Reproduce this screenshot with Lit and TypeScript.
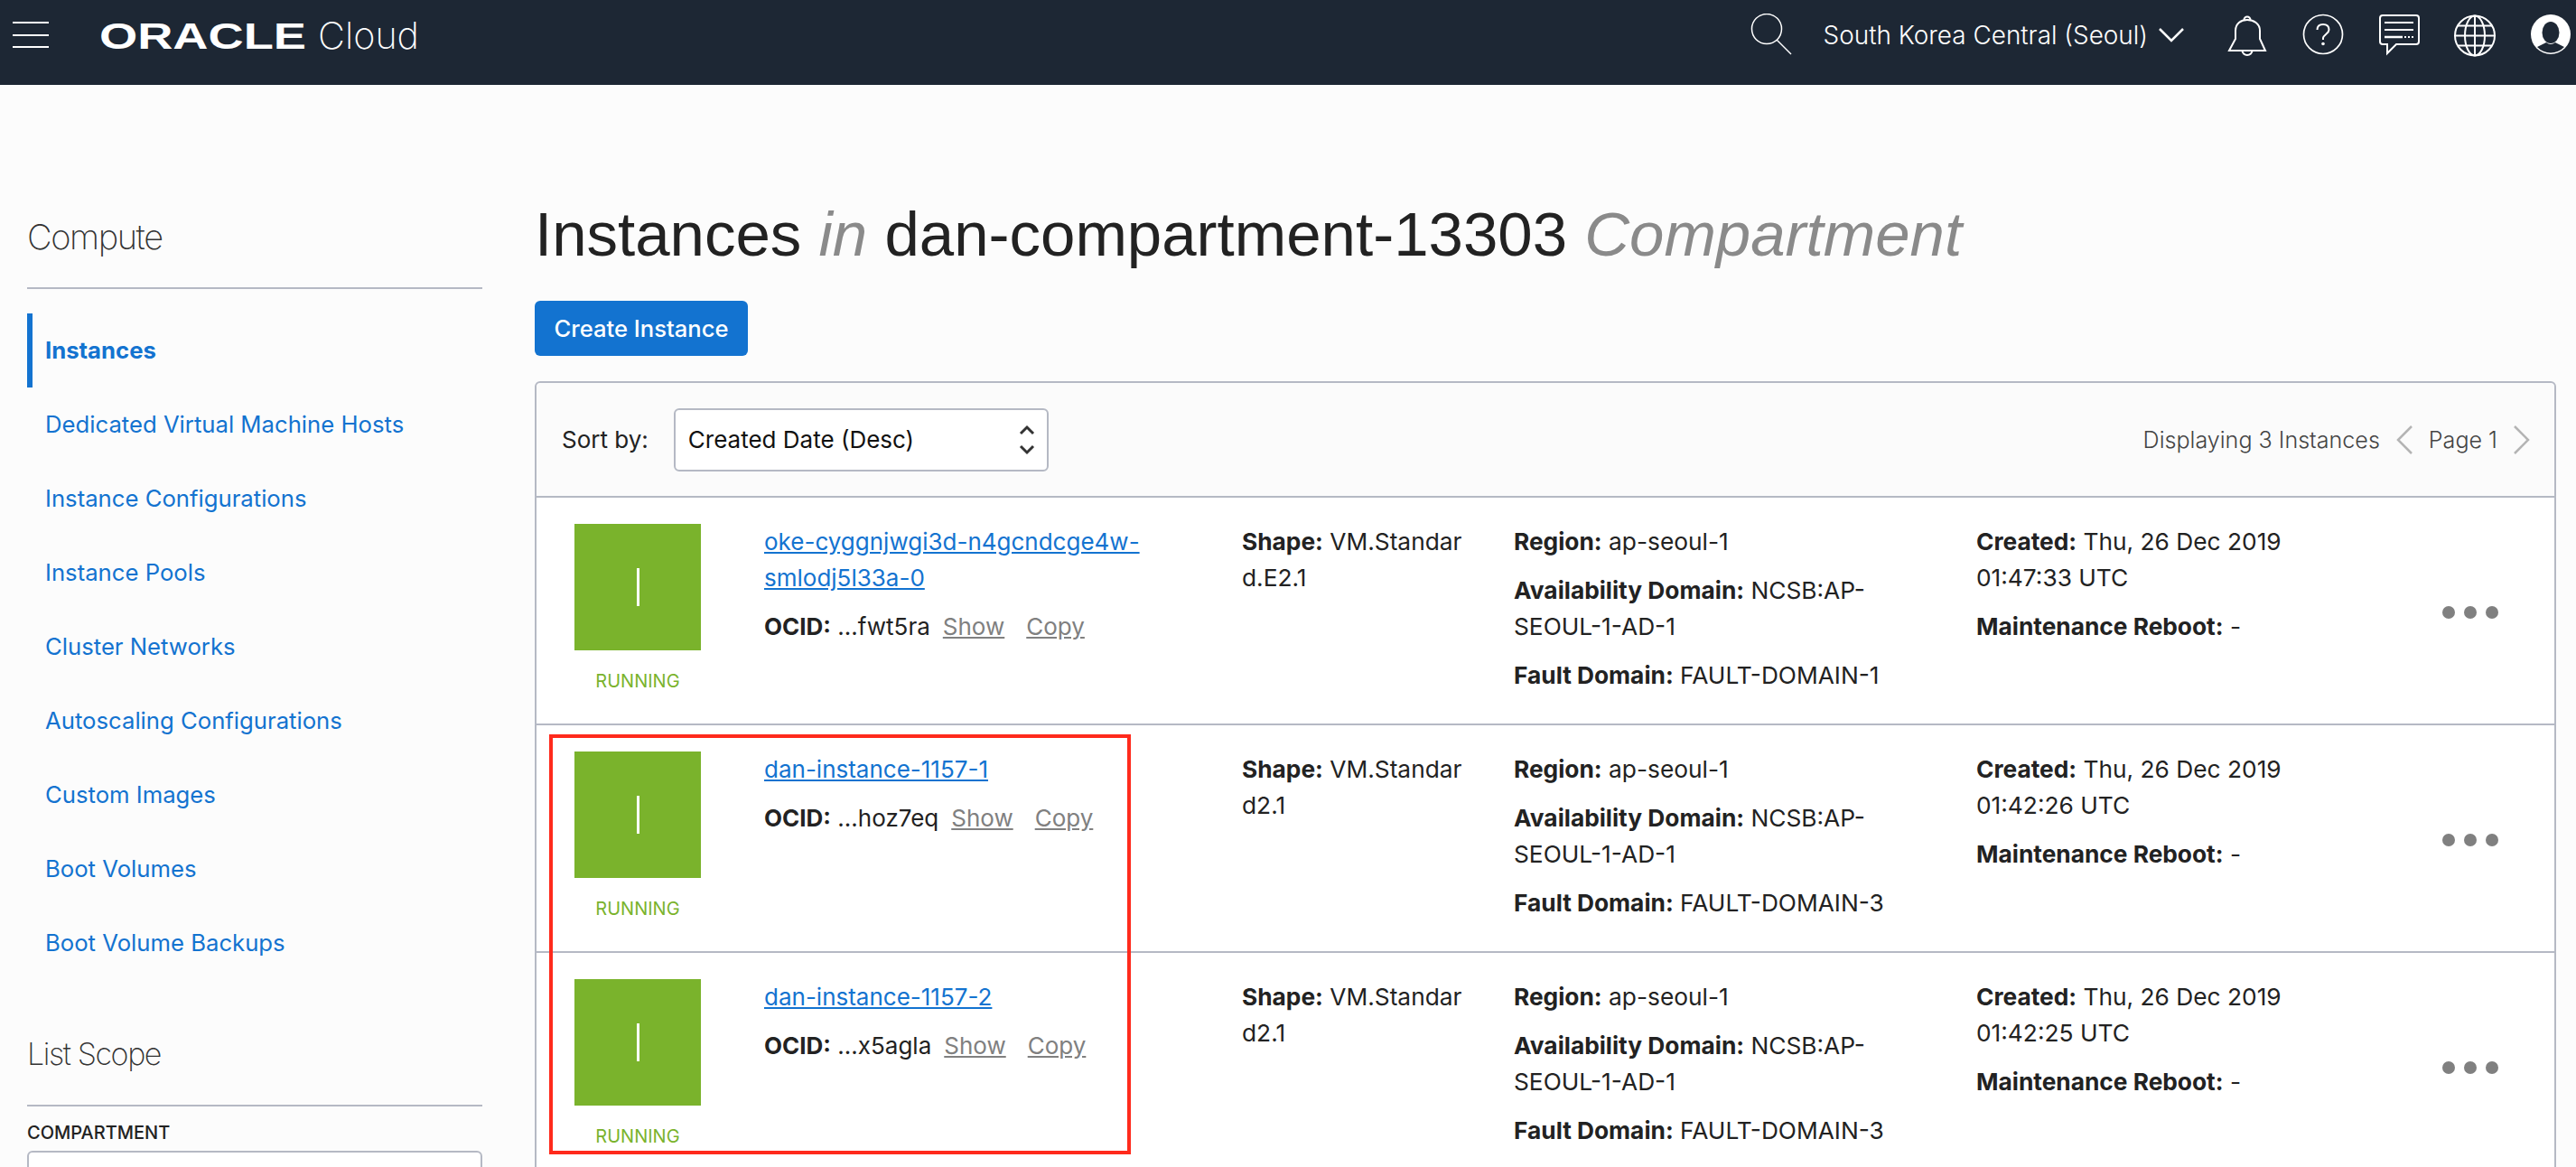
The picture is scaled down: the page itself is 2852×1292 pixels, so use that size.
import { LitElement, html, css } from 'lit';
import { customElement } from 'lit/decorators.js';

const navItems = [
  'Instances',
  'Dedicated Virtual Machine Hosts',
  'Instance Configurations',
  'Instance Pools',
  'Cluster Networks',
  'Autoscaling Configurations',
  'Custom Images',
  'Boot Volumes',
  'Boot Volume Backups',
];

// shape, domain and date break where the reference breaks them
const instances = [
  {
    name: 'oke-cyggnjwgi3d-n4gcndcge4w-smlodj5l33a-0',
    ocid: '...fwt5ra',
    shape: 'd.E2.1',
    fault: 'FAULT-DOMAIN-1',
    created: '01:47:33 UTC',
  },
  {
    name: 'dan-instance-1157-1',
    ocid: '...hoz7eq',
    shape: 'd2.1',
    fault: 'FAULT-DOMAIN-3',
    created: '01:42:26 UTC',
  },
  {
    name: 'dan-instance-1157-2',
    ocid: '...x5agla',
    shape: 'd2.1',
    fault: 'FAULT-DOMAIN-3',
    created: '01:42:25 UTC',
  },
];

@customElement('app-root')
export class AppRoot extends LitElement {
  static styles = css`
    :host {
      display: block;
      position: relative;
      height: 1292px;
      overflow: hidden;
      background: #fcfcfc;
      color: #222;
      font-family: Inter, "Liberation Sans", sans-serif;
      font-size: 26px;
      line-height: 40px;
    }

    a {
      color: #1373d0;
    }

    /* top bar */
    .topbar {
      display: flex;
      height: 94px;
      box-sizing: border-box;
      padding: 15px 4px 0 14px;
      background: #1d2734;
      color: #fff;
    }

    .burger {
      display: flex;
      flex-direction: column;
      gap: 11.5px;
      width: 40px;
      padding-top: 9px;
    }

    .burger i {
      display: block;
      height: 2px;
      background: #fff;
    }

    .logo {
      display: block;
      margin: -7px 0 0 56px;
    }

    .logo text {
      fill: #fff;
      font-family: "Liberation Sans", sans-serif;
    }

    .logo text.cloud {
      font-family: Inter, sans-serif;
      font-weight: 200;
    }

    .topbar-right {
      display: flex;
      align-items: flex-start;
      gap: 36px;
      margin-left: auto;
    }

    .topbar svg.icon {
      display: block;
      width: 48px;
      height: 48px;
      fill: none;
      stroke: #fff;
      stroke-width: 2;
    }

    .topbar svg.search {
      margin-right: -2px;
      stroke-width: 1.5;
    }

    .region {
      display: flex;
      align-items: center;
      gap: 12px;
      height: 48px;
      margin-right: 10px;
      font-size: 27.9px;
      font-weight: 300;
      white-space: nowrap;
    }

    /* page body */
    .page {
      display: flex;
      gap: 58px;
      padding: 0 22px 0 30px;
    }

    .side {
      flex: none;
      width: 504px;
      padding-top: 143px;
    }

    .side h2 {
      margin: 0;
      padding-bottom: 31px;
      border-bottom: 2px solid #b5b9c4;
      font-size: 38px;
      font-weight: 200;
      letter-spacing: -1.4px;
      line-height: 50px;
      color: #333;
    }

    .side h2.small {
      font-size: 34px;
    }

    .nav {
      margin: 27px 0 57px;
      font-size: 25.7px;
    }

    .nav a {
      display: flex;
      align-items: center;
      height: 82px;
      box-sizing: border-box;
      padding-left: 20px;
      text-decoration: none;
    }

    .nav a.active {
      border-left: 6px solid #1373d0;
      padding-left: 14px;
      font-weight: 700;
    }

    .scope-label {
      margin-top: 9px;
      font-size: 20px;
      line-height: 40px;
      font-weight: 500;
    }

    .scope-input {
      height: 70px;
      box-sizing: border-box;
      border: 2px solid #b5b9c4;
      border-radius: 6px;
      background: #fff;
    }

    .main {
      flex: 1;
      min-width: 0;
      padding-top: 128px;
    }

    h1 {
      margin: 0 0 35px;
      font-family: "Liberation Sans", sans-serif;
      font-size: 69px;
      font-weight: 400;
      line-height: 76px;
      white-space: nowrap;
    }

    h1 em {
      color: #8a8a8a;
    }

    .create {
      display: block;
      width: 236px;
      height: 61px;
      margin-bottom: 28px;
      padding: 0;
      border: 0;
      border-radius: 6px;
      background: #1373d0;
      color: #fff;
      font: 500 25.6px Inter, sans-serif;
    }

    .panel {
      border: 2px solid #b5b9c4;
      border-radius: 6px;
      background: #fff;
    }

    .toolbar {
      display: flex;
      align-items: center;
      height: 125px;
      padding: 0 26px 0 28px;
      border-bottom: 2px solid #b5b9c4;
      background: #fbfbfb;
      border-radius: 6px 6px 0 0;
    }

    .select {
      display: flex;
      align-items: center;
      justify-content: space-between;
      width: 415px;
      height: 70px;
      box-sizing: border-box;
      margin-left: 28px;
      padding: 0 12px 0 14px;
      border: 2px solid #b5b9c4;
      border-radius: 6px;
      background: #fff;
      color: #111;
    }

    .select svg {
      width: 20px;
      height: 42px;
      fill: none;
      stroke: #333;
      stroke-width: 3;
    }

    .pager {
      display: flex;
      align-items: center;
      gap: 17px;
      margin-left: auto;
      font-size: 25.1px;
      font-weight: 300;
      color: #444;
    }

    .pager svg {
      width: 20px;
      height: 32px;
      fill: none;
      stroke: #b4b4b4;
      stroke-width: 2.5;
    }

    .row {
      display: flex;
      height: 252px;
      box-sizing: border-box;
      padding: 29px 0 0 42px;
      border-bottom: 2px solid #b5b9c4;
    }

    .status {
      flex: none;
      width: 140px;
      margin-right: 70px;
      text-align: center;
    }

    .thumb {
      display: flex;
      align-items: center;
      justify-content: center;
      height: 140px;
      background: #7ab32c;
    }

    .thumb i {
      width: 3px;
      height: 42px;
      background: #fff;
    }

    .state {
      margin-top: 14px;
      color: #7ab32c;
      font-size: 20px;
    }

    .col p {
      margin: 0 0 14px;
      font-size: 26.3px;
      white-space: nowrap;
    }

    .col b {
      font-weight: 700;
    }

    .c-name {
      flex: none;
      width: 529px;
    }

    .name {
      display: block;
      width: 430px;
      margin-bottom: 14px;
    }

    .col p.ocid {
      font-size: 26px;
    }

    .c-shape {
      flex: none;
      width: 301px;
    }

    .c-region {
      flex: none;
      width: 512px;
    }

    .c-created {
      flex: none;
      width: 516px;
    }

    .ocid a {
      margin-left: 14px;
      color: #808080;
    }

    .ocid a + a {
      margin-left: 24px;
    }

    .dots {
      display: flex;
      gap: 10px;
      padding-top: 91px;
    }

    .dots i {
      width: 14px;
      height: 14px;
      border-radius: 50%;
      background: #808080;
    }

    .callout {
      position: absolute;
      left: 608px;
      top: 813px;
      width: 644px;
      height: 465px;
      box-sizing: border-box;
      border: 4px solid #ff2a1c;
    }
  `;

  renderRow(row: (typeof instances)[number]) {
    return html`
      <div class="row">
        <div class="status">
          <div class="thumb"><i></i></div>
          <div class="state">RUNNING</div>
        </div>
        <div class="col c-name">
          <a class="name" href="#">${row.name}</a>
          <p class="ocid"><b>OCID:</b> ${row.ocid}<a href="#">Show</a><a href="#">Copy</a></p>
        </div>
        <div class="col c-shape"><p><b>Shape:</b> VM.Standar<br />${row.shape}</p></div>
        <div class="col c-region">
          <p><b>Region:</b> ap-seoul-1</p>
          <p><b>Availability Domain:</b> NCSB:AP-<br />SEOUL-1-AD-1</p>
          <p><b>Fault Domain:</b> ${row.fault}</p>
        </div>
        <div class="col c-created">
          <p><b>Created:</b> Thu, 26 Dec 2019<br />${row.created}</p>
          <p><b>Maintenance Reboot:</b> -</p>
        </div>
        <div class="dots"><i></i><i></i><i></i></div>
      </div>
    `;
  }

  render() {
    return html`
      <header class="topbar">
        <div class="burger"><i></i><i></i><i></i></div>
        <svg class="logo" width="370" height="62" viewBox="0 0 370 62">
          <text x="0" y="46" font-size="41" font-weight="700" textLength="229" lengthAdjust="spacingAndGlyphs">ORACLE</text>
          <text class="cloud" x="242" y="46" font-size="41" textLength="112" lengthAdjust="spacingAndGlyphs">Cloud</text>
        </svg>
        <div class="topbar-right">
          <svg class="icon search" viewBox="0 0 48 48">
            <circle cx="19" cy="17" r="16.5"></circle>
            <path d="M30 29 46 45"></path>
          </svg>
          <div class="region">
            South Korea Central (Seoul)
            <svg width="28" height="16" viewBox="0 0 28 16" fill="none" stroke="#fff" stroke-width="2.5">
              <path d="M1 1 14 14 27 1"></path>
            </svg>
          </div>
          <svg class="icon" viewBox="0 0 48 48">
            <path d="M4 41 11 28V19C11 11 17 7 24 7S38 11 38 19V28L44 41Z"></path>
            <path d="M20.5 7a3.5 3.5 0 0 1 7 0M18.5 41a5.5 5 0 0 0 11 0"></path>
          </svg>
          <svg class="icon" viewBox="0 0 48 48" style="stroke-width:1.7">
            <circle cx="24" cy="23" r="21.5"></circle>
            <path d="M17.5 18C17.5 14 20 12 24 12S30.5 14 30.5 18C30.5 22 25 23 24 27V29" stroke-width="2"></path>
            <circle cx="24" cy="33.5" r="1.8" fill="#fff" stroke="none"></circle>
          </svg>
          <svg class="icon" viewBox="0 0 48 48">
            <path d="M6 2H43a3 3 0 0 1 3 3V31a3 3 0 0 1-3 3H21L11 44V34H6a3 3 0 0 1-3-3V5A3 3 0 0 1 6 2Z"></path>
            <path d="M8 10H40M8 18H40"></path>
            <path d="M8 26H28" stroke-width="2.5"></path>
            <path d="M30 26H40" stroke-dasharray="2 2"></path>
          </svg>
          <svg class="icon" viewBox="0 0 48 48">
            <circle cx="24" cy="24.5" r="22"></circle>
            <ellipse cx="24" cy="24.5" rx="11" ry="22"></ellipse>
            <path d="M24 2.5V46.5M2 24.5H46M5 13.5H43M5 35.5H43"></path>
          </svg>
          <svg class="icon" viewBox="0 0 48 48" style="stroke:none">
            <circle cx="24" cy="23" r="22" fill="#fff"></circle>
            <ellipse cx="24" cy="21" rx="9.5" ry="12" fill="#1d2734"></ellipse>
            <path d="M9 37 19 32Q24 36 29 32L39 37A20.5 20.5 0 0 1 9 37Z" fill="#1d2734"></path>
          </svg>
        </div>
      </header>

      <div class="page">
        <aside class="side">
          <h2>Compute</h2>
          <nav class="nav">
            ${navItems.map(
              (item, i) => html`<a href="#" class=${i === 0 ? 'active' : ''}>${item}</a>`
            )}
          </nav>
          <h2 class="small">List Scope</h2>
          <div class="scope-label">COMPARTMENT</div>
          <div class="scope-input"></div>
        </aside>

        <section class="main">
          <h1>Instances <em>in</em> dan-compartment-13303 <em>Compartment</em></h1>
          <button class="create">Create Instance</button>
          <div class="panel">
            <div class="toolbar">
              <span>Sort by:</span>
              <div class="select">
                <span>Created Date (Desc)</span>
                <svg viewBox="0 0 20 42"><path d="M3 14 10 7 17 14M3 28 10 35 17 28"></path></svg>
              </div>
              <div class="pager">
                <span>Displaying 3 Instances</span>
                <svg viewBox="0 0 20 32"><path d="M18 1 3 16 18 31"></path></svg>
                <span>Page 1</span>
                <svg viewBox="0 0 20 32"><path d="M2 1 17 16 2 31"></path></svg>
              </div>
            </div>
            ${instances.map((row) => this.renderRow(row))}
          </div>
        </section>
      </div>

      <div class="callout"></div>
    `;
  }
}
